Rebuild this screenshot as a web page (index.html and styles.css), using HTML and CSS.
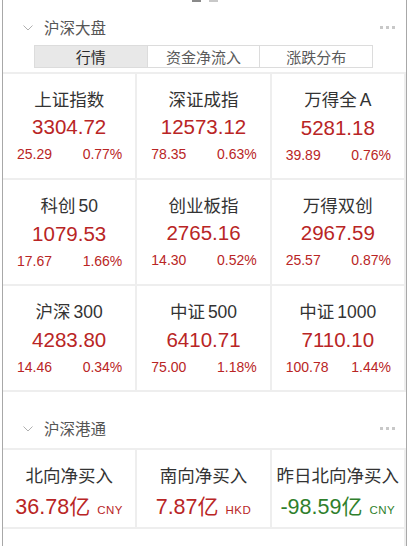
FILE: index.html
```html
<!DOCTYPE html>
<html lang="zh">
<head>
<meta charset="utf-8">
<link rel="stylesheet" href="styles.css">
</head>
<body>
<div class="card">
  <div class="topmarks"><span class="m1"></span><span class="m2"></span></div>

  <div class="sec-head">
    <svg class="chev" width="10" height="6" viewBox="0 0 10 6"><path d="M0.5 0.5 L5 5 L9.5 0.5" fill="none" stroke="#b0b0b0" stroke-width="1"/></svg>
    <span class="sec-title">沪深大盘</span>
    <span class="dots"><i></i><i></i><i></i></span>
  </div>

  <div class="tabs">
    <div class="tab active">行情</div>
    <div class="tab">资金净流入</div>
    <div class="tab">涨跌分布</div>
  </div>

  <div class="grid">
    <div class="cell"><div class="name">上证指数</div><div class="val up">3304.72</div><div class="chg up"><span>25.29</span><span>0.77%</span></div></div>
    <div class="cell"><div class="name">深证成指</div><div class="val up">12573.12</div><div class="chg up"><span>78.35</span><span>0.63%</span></div></div>
    <div class="cell"><div class="name">万得全<span class="lat">A</span></div><div class="val up">5281.18</div><div class="chg up"><span>39.89</span><span>0.76%</span></div></div>

    <div class="cell"><div class="name">科创<span class="lat">50</span></div><div class="val up">1079.53</div><div class="chg up"><span>17.67</span><span>1.66%</span></div></div>
    <div class="cell"><div class="name">创业板指</div><div class="val up">2765.16</div><div class="chg up"><span>14.30</span><span>0.52%</span></div></div>
    <div class="cell"><div class="name">万得双创</div><div class="val up">2967.59</div><div class="chg up"><span>25.57</span><span>0.87%</span></div></div>

    <div class="cell"><div class="name">沪深<span class="lat">300</span></div><div class="val up">4283.80</div><div class="chg up"><span>14.46</span><span>0.34%</span></div></div>
    <div class="cell"><div class="name">中证<span class="lat">500</span></div><div class="val up">6410.71</div><div class="chg up"><span>75.00</span><span>1.18%</span></div></div>
    <div class="cell"><div class="name">中证<span class="lat">1000</span></div><div class="val up">7110.10</div><div class="chg up"><span>100.78</span><span>1.44%</span></div></div>
  </div>

  <div class="sec-head sec2">
    <svg class="chev" width="10" height="6" viewBox="0 0 10 6"><path d="M0.5 0.5 L5 5 L9.5 0.5" fill="none" stroke="#b0b0b0" stroke-width="1"/></svg>
    <span class="sec-title">沪深港通</span>
    <span class="dots"><i></i><i></i><i></i></span>
  </div>

  <div class="grid grid2">
    <div class="cell2"><div class="name">北向净买入</div><div class="val2 up">36.78<span class="yi">亿</span><span class="cur">CNY</span></div></div>
    <div class="cell2"><div class="name">南向净买入</div><div class="val2 up">7.87<span class="yi">亿</span><span class="cur">HKD</span></div></div>
    <div class="cell2"><div class="name">昨日北向净买入</div><div class="val2 down">-98.59<span class="yi">亿</span><span class="cur">CNY</span></div></div>
    <div class="cell2 empty"></div>
  </div>
</div>
</body>
</html>
```

FILE: styles.css
```css
* { box-sizing: border-box; }
html, body { margin: 0; padding: 0; background: #fff; }
body {
  font-family: "Liberation Sans", "Noto Sans CJK SC", sans-serif;
  color: #333;
  width: 417px;
  height: 546px;
  overflow: hidden;
}
.card {
  margin-left: 2px;
  width: 405px;
  min-height: 546px;
  border-left: 1px solid #a8a8a8;
  border-right: 1px solid #a8a8a8;
  background: #fff;
}
.topmarks {
  height: 3px;
  display: flex;
  gap: 8px;
  padding-left: 189px;
}
.topmarks span { display: block; width: 9px; height: 2px; }
.topmarks .m1 { background: #8a8a8a; }
.topmarks .m2 { background: #c8c8c8; }

.sec-head {
  display: flex;
  align-items: center;
  height: 42px;
  padding: 14px 0 8px 20px;
}
.sec2 { height: 56px; padding-top: 26px; padding-bottom: 10px; }
.chev { margin-right: 11px; margin-top: 1px; }
.sec-title {
  font-family: "Noto Sans CJK SC", sans-serif;
  font-size: 15.5px;
  line-height: 20px;
  color: #555;
  flex: 1;
}
.dots { display: flex; gap: 3px; margin-right: 11px; }
.dots i { display: block; width: 3px; height: 3px; background: #c8c8c8; }

.tabs {
  display: flex;
  margin: 0 33px 0 31px;
  height: 23px;
  border: 1px solid #dcdcdc;
}
.tab {
  flex: 1;
  text-align: center;
  font-family: "Noto Sans CJK SC", sans-serif;
  font-size: 15px;
  line-height: 21px;
  color: #5a5a5a;
  border-left: 1px solid #dcdcdc;
}
.tab:first-child { border-left: none; }
.tab.active { background: #e8e8e8; color: #2a2a2a; }

.grid {
  margin-top: 4px;
  display: grid;
  grid-template-columns: repeat(3, 1fr);
  gap: 2px;
  padding: 2px 2px 2px 0;
  background: #eeeeee;
}
.grid2 { margin-top: 0; grid-template-rows: 77px 30px; }
.cell {
  background: #fff;
  height: 104px;
  display: flex;
  flex-direction: column;
  padding-top: 14px;
}
.cell2 {
  background: #fff;
  display: flex;
  flex-direction: column;
  padding-top: 14px;
}
.cell2.empty { grid-column: 1 / -1; }
.name {
  text-align: center;
  font-family: "Noto Sans CJK SC", sans-serif;
  font-size: 17.5px;
  line-height: 22px;
  color: #333;
}
.lat {
  font-family: "Liberation Sans", sans-serif;
  margin-left: 3px;
}
.val {
  text-align: center;
  font-size: 20.5px;
  line-height: 28px;
  margin-top: 3px;
}
.chg {
  display: flex;
  justify-content: space-between;
  font-size: 14px;
  line-height: 18px;
  margin-top: 4px;
  padding: 0 13px 0 14px;
}
.val2 {
  text-align: center;
  font-size: 21.5px;
  line-height: 30px;
  margin-top: 4px;
}
.yi { font-family: "Noto Sans CJK SC", sans-serif; font-size: 21px; }
.cur { font-size: 11.5px; margin-left: 7px; letter-spacing: 0.5px; }
.up { color: #b92525; }
.down { color: #2f7f2c; }
```
